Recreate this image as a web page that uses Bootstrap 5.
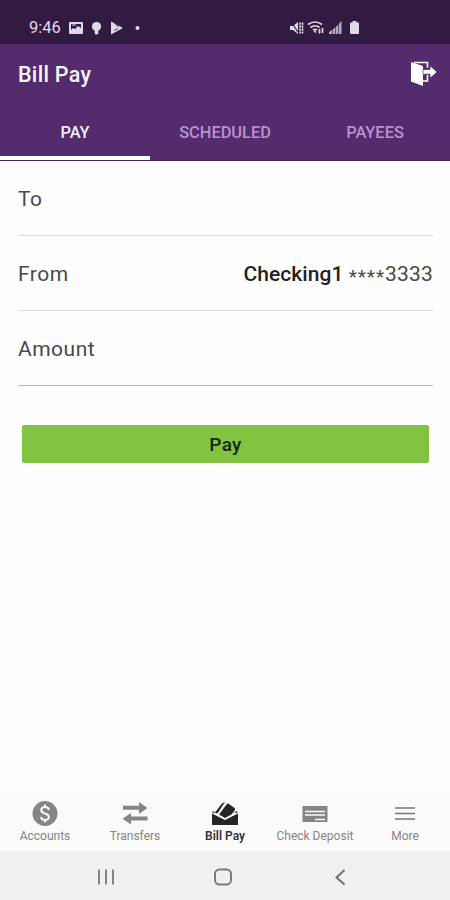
<!DOCTYPE html>
<html lang="en">
<head>
<meta charset="utf-8">
<meta name="viewport" content="width=device-width, initial-scale=1">
<title>Bill Pay</title>
<link href="https://cdn.jsdelivr.net/npm/bootstrap@5.3.0/dist/css/bootstrap.min.css" rel="stylesheet">
<style>
body{font-family:Roboto,"Liberation Sans",sans-serif;color:#484848;background:#fefefe}
svg{display:block;flex:none}
.status{height:44px;background:#321a42;color:#e2d8e8;font-size:16.5px;line-height:24px;padding:16px 89px 0 29px}
.status svg{margin-top:4px}
.status .signals{gap:3px}
.app-head{height:117px;background:#542b6c;border-bottom:1px solid #43235a}
.title-bar{height:60px;padding:1px 13px 0 18px}
.title-bar h1{font-size:21.5px;font-weight:500;letter-spacing:.3px;color:#f8f4fa}
.tabs .nav-link{height:56px;padding:4px 0 0;border-bottom:4px solid transparent;border-radius:0;font-size:16.4px;line-height:50px;color:#bb92d0;font-weight:500}
.tabs .nav-link.active{color:#f6f0f8;border-color:#fff}
.form-rows{padding:0 17px 0 18px;font-size:21px;line-height:30px}
.form-rows .line{height:75px;padding-top:2px;border-bottom:1px solid #dcdcdc}
.form-rows .line:last-child{border-color:#b8b8b8}
.lbl{letter-spacing:.5px}
.acct{color:#222;font-weight:500;letter-spacing:.05px}
.mask{letter-spacing:.2px}
.stars{font-size:19px;letter-spacing:.9px;position:relative;top:2px}
.pay-btn,.pay-btn:hover{height:38px;margin:39px 21px 0 22px;background:#82c441;border-radius:2px;color:#10290f;font-size:19px;font-weight:500;line-height:40px;padding:0;border:0;letter-spacing:.3px}
.bottom{height:59px;background:#fafafa;font-size:12px;line-height:14px;color:#858585}
.bottom .item{padding-top:8px}
.bottom svg{margin-bottom:2px}
.bottom .on{color:#333;font-weight:600}
.sys{height:49px;background:#f0f0f0;padding:2px 104px 0 97px;color:#7b7b7b}
.sys .home{margin-right:3px}
</style>
</head>
<body>
<div class="d-flex flex-column vh-100 overflow-hidden">
<div class="status d-flex justify-content-between">
  <div class="d-flex">
    <span>9:46</span>
    <svg class="ms-2" width="14" height="16" viewBox="0 0 14 16"><rect y="2" width="14" height="12" rx="1" fill="#e2d8e8"/><path d="M2 4h10v4L9 6 6 9 4 8 2 10z" fill="#321a42"/><path d="M3 5h4" stroke="#e2d8e8"/></svg>
    <svg class="ms-2" width="11" height="16" viewBox="0 0 11 16" fill="#e2d8e8"><circle cx="5.5" cy="6.5" r="4.6"/><path d="M3.7 10h3.6v3.5l-1 1H4.700l-1-1z"/></svg>
    <svg class="ms-2" width="14" height="16" viewBox="0 0 14 16"><path d="M1 1.500l12 6.500L1 14.500z" fill="#e2d8e8"/><path d="M5 3.500l3 3 4-4" fill="none" stroke="#321a42" stroke-width="1"/><path d="M4 10.500l4-2" stroke="#321a42" stroke-width=".8"/></svg>
    <svg class="ms-2" width="12" height="16" viewBox="0 0 12 16"><circle cx="5.500" cy="8" r="2" fill="#e2d8e8"/></svg>
  </div>
  <div class="signals d-flex">
    <svg width="15" height="16" viewBox="-1 0 15 16"><path d="M0 6h3l5-4v12L3 10H0z" fill="#e2d8e8"/><path d="M1 1.500l8 12" stroke="#321a42" stroke-width="1.200"/><path d="M10 2.500v11M12.500 2.500v11" fill="none" stroke="#e2d8e8" stroke-width="1.700" stroke-dasharray="2.200 .8"/></svg>
    <svg width="18" height="16" viewBox="-1 0 18 16" fill="none" stroke="#e2d8e8" stroke-width="1.700"><path d="M0 4.500q7-5 14 0M2.500 7.500q4.500-3.500 9 0M5 10q2-1.500 4 0"/><path d="M6 10.500l2 2M11.500 13.500V9M14.500 8v5" stroke-width="1.700"/></svg>
    <svg width="14" height="16" viewBox="-1 0 14 16" fill="#e2d8e8"><path d="M0 14v-2l3-2v4zM3.600 14V9.500l2.500-2V14zM6.700 14V7l2.500-2.200V14zM9.800 14V4L12.500 1v13z" opacity=".75"/></svg>
    <svg class="ms-1" width="12" height="16" viewBox="0 0 12 16" fill="#e2d8e8"><path d="M3.500 1h4v1.500H9.500q.5 0 .5 1V13q0 1-1 1H2q-1 0-1-1V3.500q0-1 .5-1h2z"/></svg>
  </div>
</div>
<header class="app-head">
  <div class="title-bar d-flex align-items-center justify-content-between">
    <h1 class="m-0">Bill Pay</h1>
    <svg width="27" height="27" viewBox="0 0 27 27"><path d="M4 1.500h13.500v5M17.500 14v6H13" fill="none" stroke="#fff" stroke-width="1.600"/><path d="M1 1l12 4v20L1 20.500z" fill="#fff"/><path d="M13 8.500h7V4.800l7 6.200-7 6.200v-4h-7z" fill="#fff" stroke="#542b6c" stroke-width=".7"/></svg>
  </div>
  <nav class="tabs nav nav-fill row g-0 text-center">
    <a class="nav-link active col-4" href="#">PAY</a>
    <a class="nav-link col-4" href="#">SCHEDULED</a>
    <a class="nav-link col-4" href="#">PAYEES</a>
  </nav>
</header>
<main class="flex-grow-1">
  <div class="form-rows">
    <div class="line d-flex align-items-center"><span class="lbl">To</span></div>
    <div class="line d-flex align-items-center justify-content-between"><span class="lbl">From</span><span><span class="acct">Checking1</span> <span class="stars">****</span><span class="mask">3333</span></span></div>
    <div class="line d-flex align-items-center"><span class="lbl">Amount</span></div>
  </div>
  <div class="d-grid"><button class="pay-btn btn">Pay</button></div>
</main>
<nav class="bottom row g-0 row-cols-5 text-center text-nowrap">
  <div class="item col d-flex flex-column align-items-center">
    <svg width="26" height="27" viewBox="0 0 26 27"><circle cx="13" cy="13.500" r="12.500" fill="#858585"/><path d="M17 10q-.5-3-4-3t-3.800 3q0 2.500 3.800 3.500t4 3.500q-.3 3-4 3t-4-3.200M13 4.500V7m0 13v2.500" fill="none" stroke="#fafafa" stroke-width="2"/></svg><span>Accounts</span></div>
  <div class="item col d-flex flex-column align-items-center">
    <svg width="26" height="27" viewBox="0 0 26 27" fill="#858585"><path d="M1 5.800h16V2l8.500 6-8.500 6v-4.200H1zM25.500 16.500H9V13L.5 18.800 9 24.500v-4h16.500z"/></svg><span>Transfers</span></div>
  <div class="item on col d-flex flex-column align-items-center">
    <svg width="28" height="27" viewBox="0 0 28 27" fill="#252525"><path d="M1 13.500L14 20l13-6.500V25H1z"/><path d="M8 14.500L15.500 4.500q1-1.500 2.500-.5l5.500 4q1.200 1 .3 2.200L20.500 14.500 14 18z"/><path d="M4 12.500L11 3.500l3-1.500L6.500 13.500zM1 12.500l1.500-1.500 2 2zM27 12.500l-1.500-1.500-2.500 2z"/></svg><span>Bill Pay</span></div>
  <div class="item col d-flex flex-column align-items-center">
    <svg width="26" height="27" viewBox="0 0 26 27"><path d="M.5 6h25v16H.5z" fill="#858585"/><path d="M3 11.500h20M3 15h20M13 19.500h10" stroke="#fafafa" stroke-width="1.300"/></svg><span>Check Deposit</span></div>
  <div class="item col d-flex flex-column align-items-center">
    <svg width="26" height="27" viewBox="0 0 26 27"><path d="M3 8h20M3 13.500h20M3 19h20" stroke="#777" stroke-width="1.700"/></svg><span>More</span></div>
</nav>
<div class="sys d-flex align-items-center justify-content-between">
  <svg width="18" height="20" viewBox="0 0 18 20"><path d="M2 2.500v15M9 2.500v15M16 2.500v15" stroke="#848484" stroke-width="2"/></svg>
  <svg class="home" width="20" height="20" viewBox="0 0 20 20"><rect x="2" y="2.500" width="16" height="15" rx="4.500" fill="none" stroke="#7b7b7b" stroke-width="2"/></svg>
  <svg width="12" height="20" viewBox="0 0 12 20"><path d="M10.500 3L2.500 10.500l8 7" fill="none" stroke="#707070" stroke-width="2"/></svg>
</div>
</div>
<script src="https://cdn.jsdelivr.net/npm/bootstrap@5.3.0/dist/js/bootstrap.bundle.min.js"></script>
</body>
</html>
